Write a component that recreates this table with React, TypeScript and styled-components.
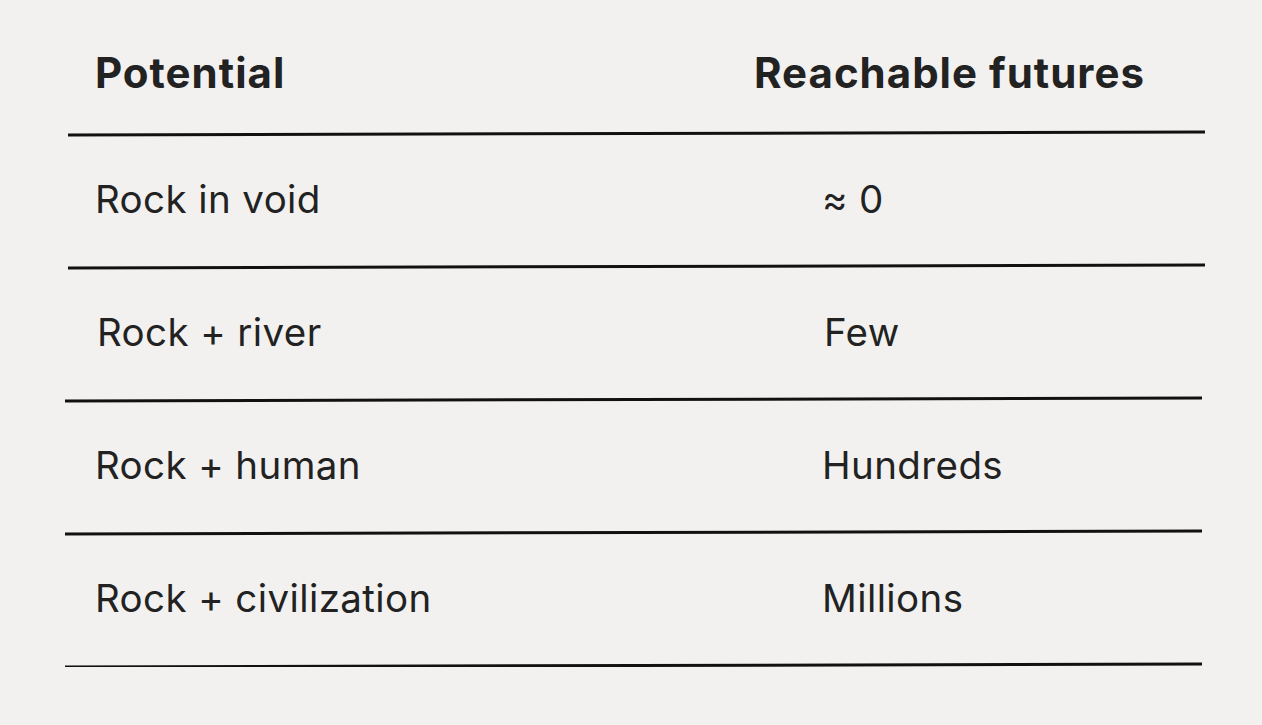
import React from 'react';
import styled, { createGlobalStyle } from 'styled-components';

const GlobalStyle = createGlobalStyle`
  body {
    margin: 0;
    background: #f2f1ef;
    color: #222222;
    font-family: Inter, 'Noto Sans', sans-serif;
  }
`;

const Table = styled.div`
  width: 1140px;
  margin-left: 65px;
  display: flex;
  flex-direction: column;
`;

const HeaderRow = styled.div`
  display: grid;
  grid-template-columns: 659px 1fr;
  align-items: center;
  height: 132px;
  padding: 13px 0 0 30px;
  box-sizing: border-box;
`;

const HeadCell = styled.div`
  font-size: 42px;
  font-weight: 700;
  letter-spacing: 1px;
`;

const Row = styled.div<{ $indent?: number }>`
  display: grid;
  grid-template-columns: 659px 1fr;
  align-items: center;
  height: 130px;
  padding: 0 0 2px ${(p) => 30 + (p.$indent ?? 0)}px;
  box-sizing: border-box;
`;

const Cell = styled.div<{ $value?: boolean }>`
  font-size: 38.5px;
  font-weight: 400;
  letter-spacing: 0.4px;
  padding-left: ${(p) => (p.$value ? '68px' : '0')};
`;

const Rule = styled.div<{ $shift?: number }>`
  width: 1137px;
  height: 3px;
  background: #111111;
  margin-left: ${(p) => p.$shift ?? 0}px;
  transform: rotate(-0.15deg);
`;

const rows = [
  { label: 'Rock in void', value: '≈ 0' },
  { label: 'Rock + river', value: 'Few', indent: 2 },
  { label: 'Rock + human', value: 'Hundreds' },
  { label: 'Rock + civilization', value: 'Millions' },
];

export default function App() {
  return (
    <>
      <GlobalStyle />
      <Table>
        <HeaderRow>
          <HeadCell>Potential</HeadCell>
          <HeadCell>Reachable futures</HeadCell>
        </HeaderRow>
        <Rule $shift={3} />
        {rows.map((row, i) => (
          <React.Fragment key={row.label}>
            <Row $indent={row.indent}>
              <Cell>{row.label}</Cell>
              <Cell $value>{row.value}</Cell>
            </Row>
            <Rule $shift={i === 0 ? 3 : 0} />
          </React.Fragment>
        ))}
      </Table>
    </>
  );
}
